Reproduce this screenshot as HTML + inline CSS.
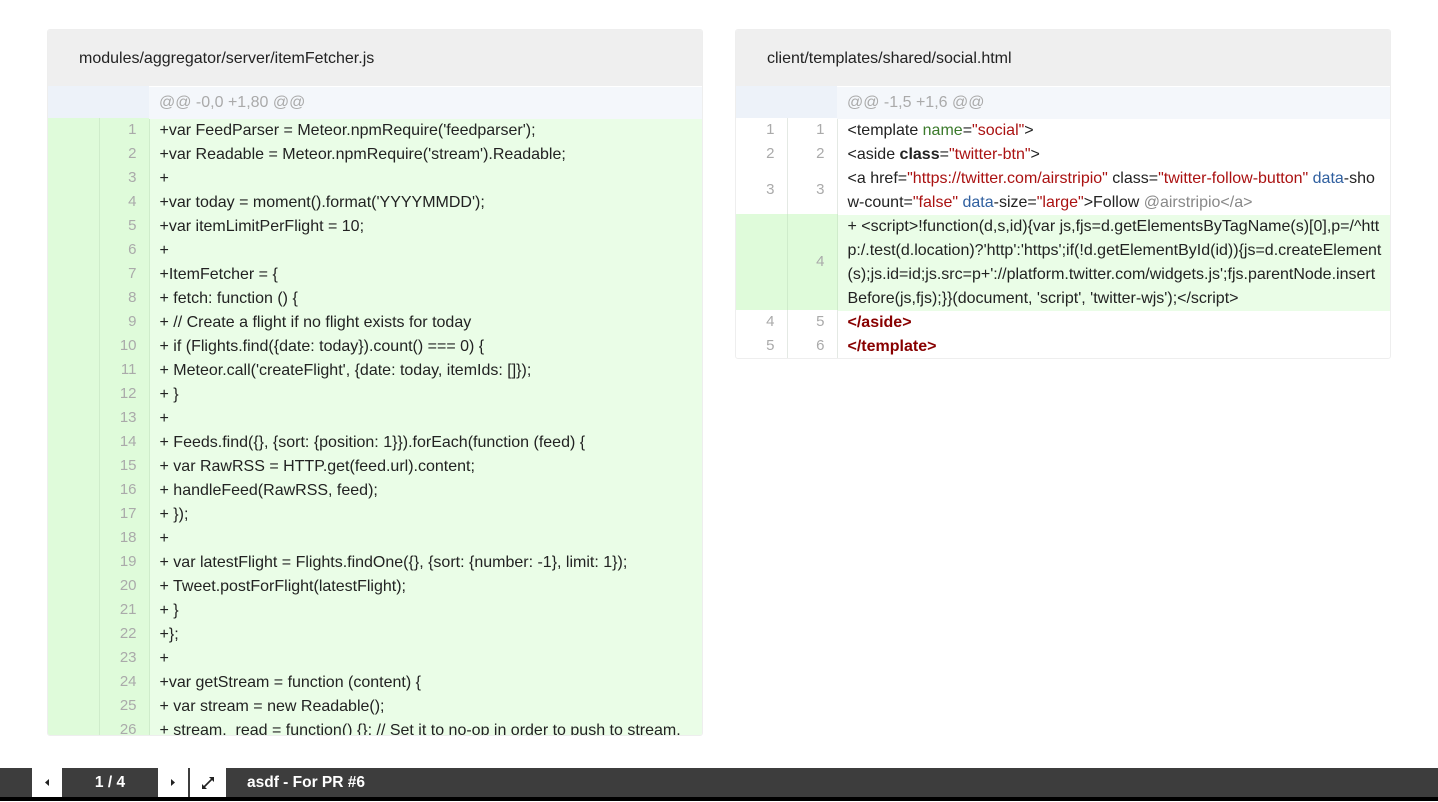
<!DOCTYPE html>
<html><head><meta charset="utf-8"><style>
*{margin:0;padding:0;box-sizing:border-box}
body{width:1438px;height:801px;overflow:hidden;background:#fff;font-family:"Liberation Sans",Helvetica,Arial,sans-serif;font-size:16px;color:#222;position:relative}
.panel{position:absolute;top:29px;width:656px;border:1px solid #eee;border-radius:3px;overflow:hidden;background:#fff}
.hdr{height:56px;background:#efefef;padding-left:31px;line-height:57px;font-size:16px;color:#222}
table{border-collapse:collapse;width:100%;table-layout:fixed}
td{line-height:24px;vertical-align:middle}
td.n{width:51px;text-align:right;padding-right:12px;color:#aaa;font-size:15px;border-right:1px solid #e4e9e4}
td.n2{width:50px}
td.c{padding-left:10px;padding-right:8px;word-break:break-all;white-space:pre-wrap;position:relative;top:1px}
tr.h td{height:32px;background:#f4f7fb;color:#aaa}
tr.h td.n{background:#edf2f9;border-right:none}
tr.a td{background:#eafde7}
tr.a td.n{background:#dffbda;border-right:1px solid #cfeccb}
.at{color:#3b7a2b}.s{color:#a11}.k{font-weight:bold}.b{color:#2f5f9f}.g{color:#888}.e{color:#800;font-weight:bold}
.bar{position:absolute;left:0;top:768px;width:1438px;height:29px;background:#3d3d3d}
.bot{position:absolute;left:0;top:797px;width:1438px;height:4px;background:#000}
.btn{position:absolute;top:0;height:29px;background:#fff}
</style></head><body>
<div class="panel" style="left:47px;height:707px">
<div class="hdr">modules/aggregator/server/itemFetcher.js</div>
<table>
<tr class="h"><td class="n"></td><td class="n n2"></td><td class="c">@@ -0,0 +1,80 @@</td></tr>
<tr class="a"><td class="n"></td><td class="n n2">1</td><td class="c">+var FeedParser = Meteor.npmRequire('feedparser');</td></tr>
<tr class="a"><td class="n"></td><td class="n n2">2</td><td class="c">+var Readable = Meteor.npmRequire('stream').Readable;</td></tr>
<tr class="a"><td class="n"></td><td class="n n2">3</td><td class="c">+</td></tr>
<tr class="a"><td class="n"></td><td class="n n2">4</td><td class="c">+var today = moment().format('YYYYMMDD');</td></tr>
<tr class="a"><td class="n"></td><td class="n n2">5</td><td class="c">+var itemLimitPerFlight = 10;</td></tr>
<tr class="a"><td class="n"></td><td class="n n2">6</td><td class="c">+</td></tr>
<tr class="a"><td class="n"></td><td class="n n2">7</td><td class="c">+ItemFetcher = {</td></tr>
<tr class="a"><td class="n"></td><td class="n n2">8</td><td class="c">+ fetch: function () {</td></tr>
<tr class="a"><td class="n"></td><td class="n n2">9</td><td class="c">+ // Create a flight if no flight exists for today</td></tr>
<tr class="a"><td class="n"></td><td class="n n2">10</td><td class="c">+ if (Flights.find({date: today}).count() === 0) {</td></tr>
<tr class="a"><td class="n"></td><td class="n n2">11</td><td class="c">+ Meteor.call('createFlight', {date: today, itemIds: []});</td></tr>
<tr class="a"><td class="n"></td><td class="n n2">12</td><td class="c">+ }</td></tr>
<tr class="a"><td class="n"></td><td class="n n2">13</td><td class="c">+</td></tr>
<tr class="a"><td class="n"></td><td class="n n2">14</td><td class="c">+ Feeds.find({}, {sort: {position: 1}}).forEach(function (feed) {</td></tr>
<tr class="a"><td class="n"></td><td class="n n2">15</td><td class="c">+ var RawRSS = HTTP.get(feed.url).content;</td></tr>
<tr class="a"><td class="n"></td><td class="n n2">16</td><td class="c">+ handleFeed(RawRSS, feed);</td></tr>
<tr class="a"><td class="n"></td><td class="n n2">17</td><td class="c">+ });</td></tr>
<tr class="a"><td class="n"></td><td class="n n2">18</td><td class="c">+</td></tr>
<tr class="a"><td class="n"></td><td class="n n2">19</td><td class="c">+ var latestFlight = Flights.findOne({}, {sort: {number: -1}, limit: 1});</td></tr>
<tr class="a"><td class="n"></td><td class="n n2">20</td><td class="c">+ Tweet.postForFlight(latestFlight);</td></tr>
<tr class="a"><td class="n"></td><td class="n n2">21</td><td class="c">+ }</td></tr>
<tr class="a"><td class="n"></td><td class="n n2">22</td><td class="c">+};</td></tr>
<tr class="a"><td class="n"></td><td class="n n2">23</td><td class="c">+</td></tr>
<tr class="a"><td class="n"></td><td class="n n2">24</td><td class="c">+var getStream = function (content) {</td></tr>
<tr class="a"><td class="n"></td><td class="n n2">25</td><td class="c">+ var stream = new Readable();</td></tr>
<tr class="a"><td class="n"></td><td class="n n2">26</td><td class="c">+ stream._read = function() {}; // Set it to no-op in order to push to stream.</td></tr>
<tr class="a"><td class="n"></td><td class="n n2">27</td><td class="c">+ stream.push(content);</td></tr>
</table>
</div>

<div class="panel" style="left:735px">
<div class="hdr">client/templates/shared/social.html</div>
<table>
<tr class="h"><td class="n"></td><td class="n n2"></td><td class="c">@@ -1,5 +1,6 @@</td></tr>
<tr><td class="n">1</td><td class="n n2">1</td><td class="c">&lt;template <span class="at">name</span>=<span class="s">"social"</span>&gt;</td></tr>
<tr><td class="n">2</td><td class="n n2">2</td><td class="c">&lt;aside <span class="k">class</span>=<span class="s">"twitter-btn"</span>&gt;</td></tr>
<tr><td class="n">3</td><td class="n n2">3</td><td class="c">&lt;a href=<span class="s">"https://twitter.com/airstripio"</span> class=<span class="s">"twitter-follow-button"</span> <span class="b">data</span>-show-count=<span class="s">"false"</span> <span class="b">data</span>-size=<span class="s">"large"</span>&gt;Follow <span class="g">@airstripio&lt;/a&gt;</span></td></tr>
<tr class="a"><td class="n"></td><td class="n n2">4</td><td class="c">+ &lt;script&gt;!function(d,s,id){var js,fjs=d.getElementsByTagName(s)[0],p=/^http:/.test(d.location)?'http':'https';if(!d.getElementById(id)){js=d.createElement(s);js.id=id;js.src=p+'://platform.twitter.com/widgets.js';fjs.parentNode.insertBefore(js,fjs);}}(document, 'script', 'twitter-wjs');&lt;/script&gt;</td></tr>
<tr><td class="n">4</td><td class="n n2">5</td><td class="c"><span class="e">&lt;/aside&gt;</span></td></tr>
<tr><td class="n">5</td><td class="n n2">6</td><td class="c"><span class="e">&lt;/template&gt;</span></td></tr>
</table>
</div>

<div class="bar">
<div class="btn" style="left:32px;width:30px"><svg width="30" height="29"><path d="M13 14.5 L17 11 L17 18 Z" fill="#222"/></svg></div>
<div style="position:absolute;left:62px;width:96px;top:0;line-height:29px;text-align:center;color:#fff;font-size:15.5px;font-weight:bold">1 / 4</div>
<div class="btn" style="left:158px;width:30px"><svg width="30" height="29"><path d="M17 14.5 L13 11 L13 18 Z" fill="#222"/></svg></div>
<div class="btn" style="left:190px;width:36px"><svg width="36" height="29"><path d="M13 20 L23 10" stroke="#222" stroke-width="1.6"/><path d="M19 9 L24 9 L24 14 Z M12 16 L12 21 L17 21 Z" fill="#222"/></svg></div>
<div style="position:absolute;left:247px;top:0;line-height:29px;color:#fff;font-size:15.5px;font-weight:bold">asdf - For PR #6</div>
</div>
<div class="bot"></div>
</body></html>
